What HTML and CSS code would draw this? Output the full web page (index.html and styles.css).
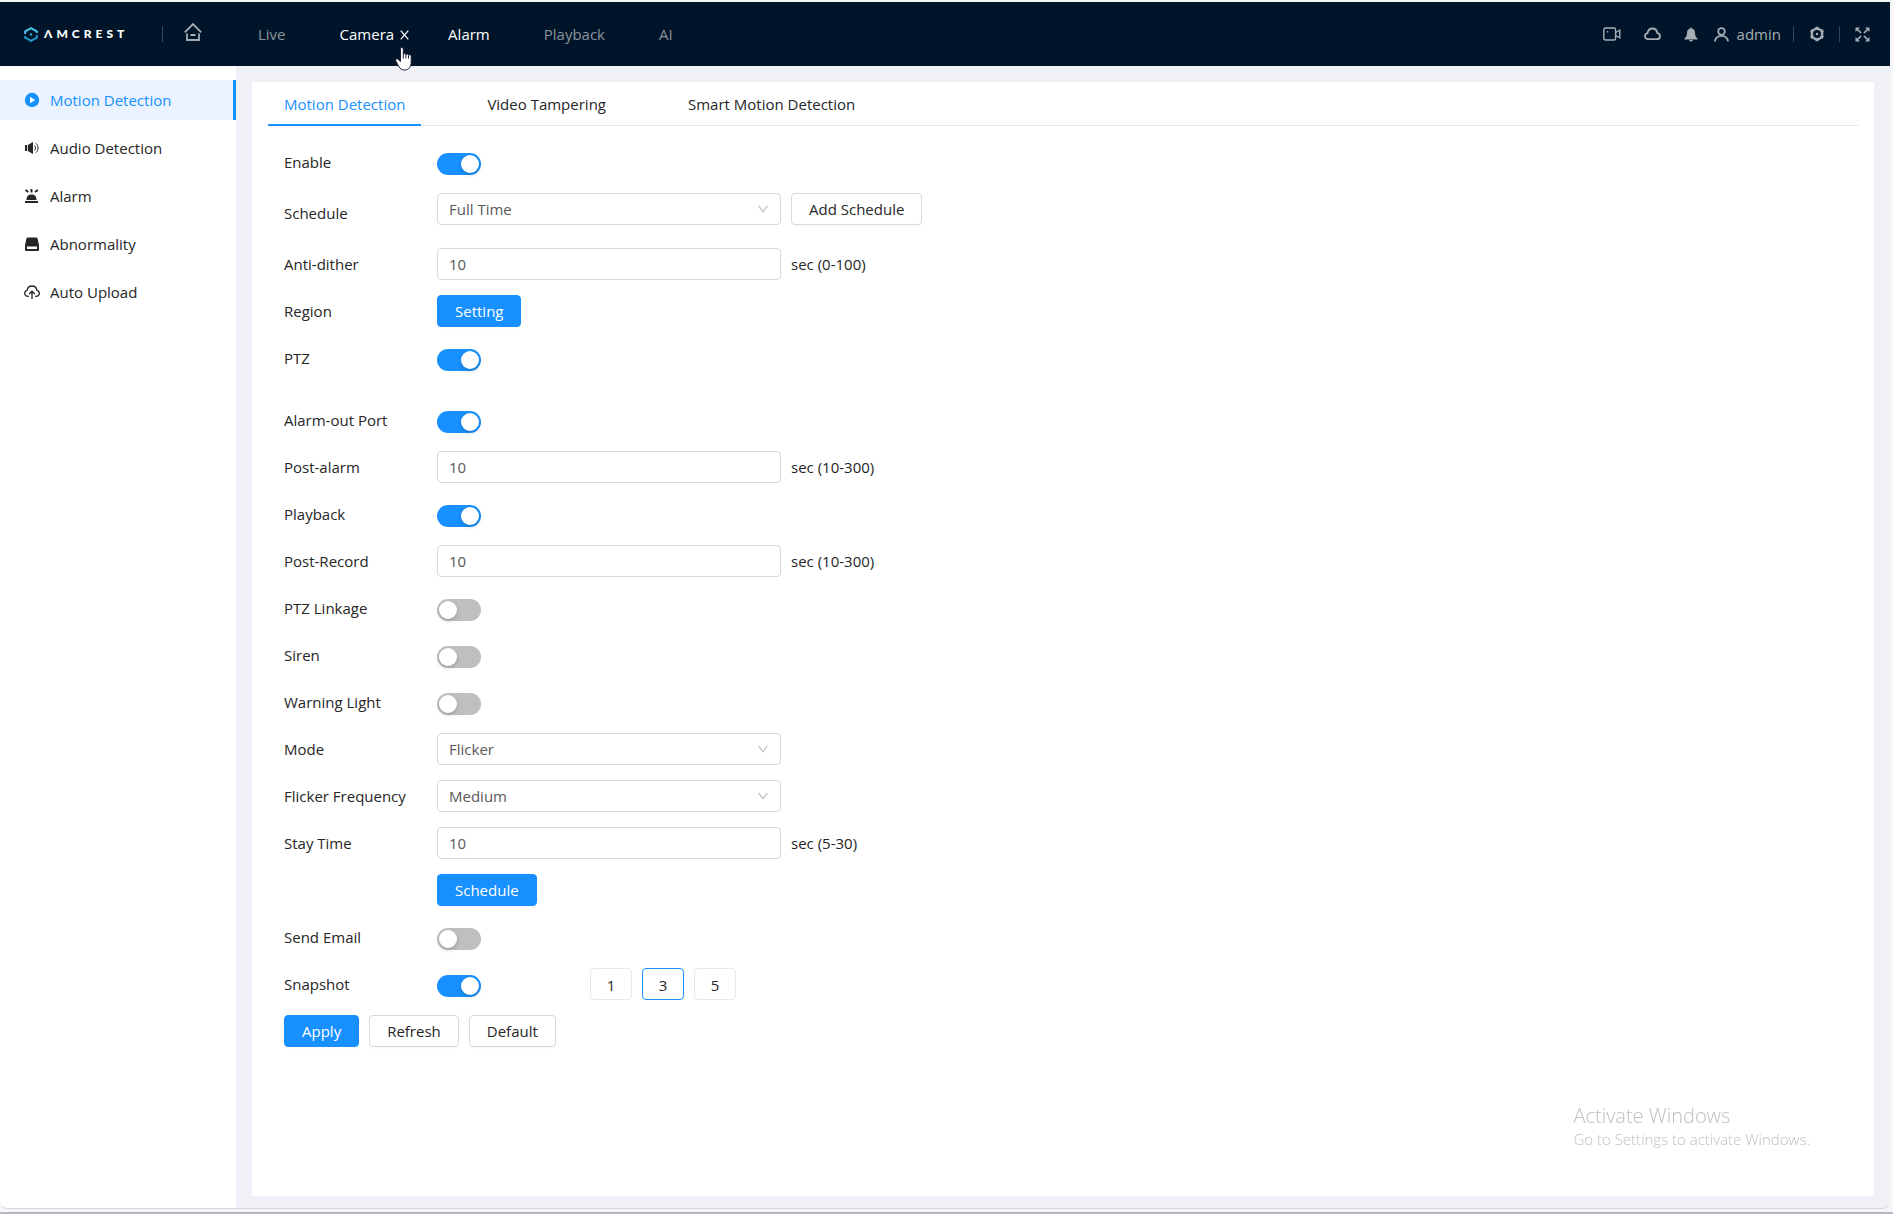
FILE: index.html
```
<!DOCTYPE html>
<html lang="en">
<head>
    <meta charset="UTF-8">
    <title>Amcrest - Motion Detection</title>
    <link rel="stylesheet" href="styles.css">
</head>
<body>
<div class="app">
    <!-- Top bar -->
    <header class="topbar">
        <a href="#" class="brand">
            <svg class="brand-mark" viewBox="0 0 14 15" width="14" height="15" fill="none" stroke-width="2">
                <path d="M1.200 7V4.400L7 1.200l5.800 3.200V6" stroke="#4cc4ea"/>
                <path d="M1.200 9v1.700L7 13.800l5.800-3.100V8" stroke="#1c97cf"/>
                <circle cx="7" cy="7.500" r="1.200" fill="#29a8dc"/>
            </svg>
            <span class="brand-name">ΛMCREST</span>
        </a>
        <span class="divider"></span>
        <a href="#" class="home" aria-label="Home">
            <svg viewBox="0 0 18 20" width="18" height="20" fill="none" stroke="currentColor" stroke-width="1.800">
                <path d="M.8 10.300 9 2l8.200 8.300"/>
                <path d="M3 11.500V18h12v-6.500"/>
                <path d="M6.500 13h5"/>
            </svg>
        </a>
        <nav class="main-nav">
            <a href="#">Live</a>
            <a href="#" class="open">Camera
                <svg class="close" viewBox="0 0 9 10" width="9" height="10" stroke="currentColor" stroke-width="1.200"><path d="M.7.700l7.600 8.600M8.300.700.700 9.300"/></svg>
            </a>
            <a href="#" class="current">Alarm</a>
            <a href="#">Playback</a>
            <a href="#">AI</a>
        </nav>
        <div class="tools">
            <button type="button" class="tool" aria-label="Record">
                <svg viewBox="0 0 18 14" width="18" height="14" fill="none" stroke="currentColor" stroke-width="1.400">
                    <rect x=".8" y="1" width="11.800" height="12" rx="1.500"/>
                    <path d="M12.600 5.500 16.800 3.200v7.600L12.600 8.500"/>
                    <circle cx="4.500" cy="4.700" r=".8" fill="currentColor" stroke="none"/>
                </svg>
            </button>
            <button type="button" class="tool" aria-label="Cloud">
                <svg viewBox="0 0 17 14" width="17" height="14" fill="none" stroke="currentColor" stroke-width="1.800">
                    <path d="M4.300 12.200C2.300 12.200 1 10.900 1 9.200c0-1.500 1-2.700 2.500-3C4 3.300 6 1.500 8.500 1.500s4.400 1.800 4.900 4.600c1.600.3 2.600 1.600 2.600 3.100 0 1.700-1.400 3-3.300 3z"/>
                </svg>
            </button>
            <button type="button" class="tool" aria-label="Notifications">
                <svg viewBox="0 0 14 15" width="14" height="15" fill="currentColor">
                    <path d="M6.300 1.600V.5h1.400v1.100c2.200.4 3.300 2 3.300 4.200 0 2.600.6 4.300 2.500 5.600v1H.5v-1C2.400 10.100 3 8.400 3 5.800c0-2.200 1.100-3.800 3.300-4.200z"/>
                    <path d="M5.200 13h3.600c-.3 1-.9 1.500-1.800 1.500S5.500 14 5.200 13z"/>
                </svg>
            </button>
            <button type="button" class="tool user">
                <svg viewBox="0 0 15 15" width="15" height="15" fill="none" stroke="currentColor" stroke-width="1.800">
                    <circle cx="7.500" cy="4.500" r="3.300"/>
                    <path d="M1 14.500C1.400 10.900 3.900 8.800 7.500 8.800s6.100 2.100 6.500 5.700"/>
                </svg>
                <span>admin</span>
            </button>
            <span class="divider"></span>
            <button type="button" class="tool" aria-label="Settings">
                <svg viewBox="0 0 16 16" width="16" height="16" fill="none" stroke="currentColor">
                    <circle cx="8" cy="8" r="5.200" stroke-width="2.400"/>
                    <path d="M8 .8v2M8 13.200v2M1.800 4.400l1.700 1M12.500 10.600l1.700 1M1.800 11.600l1.700-1M12.500 5.400l1.700-1" stroke-width="3"/>
                    <circle cx="8" cy="8" r="1.200" fill="currentColor" stroke="none"/>
                </svg>
            </button>
            <span class="divider"></span>
            <button type="button" class="tool" aria-label="Full screen">
                <svg viewBox="0 0 15 15" width="15" height="15" fill="currentColor" stroke="currentColor">
                    <path d="M1.500 1.500 6 6M13.500 1.500 9 6M1.500 13.500 6 9M13.500 13.500 9 9" stroke-width="1.700"/>
                    <path d="M.5.500H5L.5 5zM14.500.500V5L10 .500zM.5 14.500V10L5 14.500zM14.500 14.500H10l4.500-4.500z" stroke="none"/>
                </svg>
            </button>
        </div>
    </header>

    <div class="body">
        <!-- Side menu -->
        <aside class="sidebar">
            <a href="#" class="menu-item active">
                <svg viewBox="0 0 16 16" width="16" height="16"><circle cx="8" cy="8" r="7.200" fill="currentColor"/><path d="M6 4.800v6.400L11.200 8z" fill="#fff"/></svg>
                Motion Detection
            </a>
            <a href="#" class="menu-item">
                <svg viewBox="0 0 16 16" width="16" height="16" fill="currentColor">
                    <path d="M1 5h2v6H1zM3.800 5 9 2v12l-5.200-3z"/>
                    <path d="M10.500 5.500c1.300 1.300 1.300 3.700 0 5M12 3.300c2.800 2.600 2.800 6.800 0 9.400" fill="none" stroke="currentColor"/>
                </svg>
                Audio Detection
            </a>
            <a href="#" class="menu-item">
                <svg viewBox="0 0 16 16" width="16" height="16" fill="currentColor">
                    <path d="M1 13h13v2H1zM2.500 12C2.500 8 4.500 6.500 7.500 6.500s5 1.500 5 5.500z"/>
                    <path d="M7.500 1v3.500M1.500 2l2.800 2M13.800 2 11 4" stroke="currentColor" stroke-width="2"/>
                </svg>
                Alarm
            </a>
            <a href="#" class="menu-item">
                <svg viewBox="0 0 16 16" width="16" height="16" fill="currentColor">
                    <path fill-rule="evenodd" d="M3.500 1.500h9c.5 0 .8.200 1 .7L15 9v5c0 .600-.4 1-1 1H2c-.6 0-1-.400-1-1V9l1.500-6.800c.2-.5.5-.7 1-.7zM3 10.500V13h10v-2.500z"/>
                </svg>
                Abnormality
            </a>
            <a href="#" class="menu-item">
                <svg viewBox="0 0 16 16" width="16" height="16" fill="none" stroke="currentColor" stroke-width="1.300">
                    <path d="M4.800 12.300H4C2 12.300.7 11 .7 9.300c0-1.500.9-2.600 2.400-2.900C3.500 3.600 5.400 2 8 2s4.500 1.600 4.900 4.400c1.500.3 2.400 1.400 2.400 2.900 0 1.700-1.300 3-3.300 3h-.8"/>
                    <path d="M8 15V7.500M5.200 10 8 7.200l2.800 2.800"/>
                </svg>
                Auto Upload
            </a>
        </aside>

        <main class="card">
            <nav class="tabs">
                <a href="#" class="tab active">Motion Detection</a>
                <a href="#" class="tab">Video Tampering</a>
                <a href="#" class="tab">Smart Motion Detection</a>
            </nav>

            <form class="settings">
                <div class="row">
                    <label for="enable">Enable</label>
                    <input type="checkbox" class="switch" id="enable" checked>
                </div>
                <div class="row row-tall">
                    <label for="schedule">Schedule</label>
                    <select class="field" id="schedule"><option>Full Time</option></select>
                    <button type="button" class="btn">Add Schedule</button>
                </div>
                <div class="row">
                    <label for="dither">Anti-dither</label>
                    <input type="text" class="field" id="dither" value="10">
                    <span>sec (0-100)</span>
                </div>
                <div class="row">
                    <label for="region">Region</label>
                    <button type="button" class="btn primary" id="region">Setting</button>
                </div>
                <div class="row">
                    <label for="ptz">PTZ</label>
                    <input type="checkbox" class="switch" id="ptz" checked>
                </div>

                <!-- Linkage actions -->
                <div class="row section-start">
                    <label for="alarmOut">Alarm-out Port</label>
                    <input type="checkbox" class="switch" id="alarmOut" checked>
                </div>
                <div class="row">
                    <label for="postAlarm">Post-alarm</label>
                    <input type="text" class="field" id="postAlarm" value="10">
                    <span>sec (10-300)</span>
                </div>
                <div class="row">
                    <label for="playback">Playback</label>
                    <input type="checkbox" class="switch" id="playback" checked>
                </div>
                <div class="row">
                    <label for="postRecord">Post-Record</label>
                    <input type="text" class="field" id="postRecord" value="10">
                    <span>sec (10-300)</span>
                </div>
                <div class="row">
                    <label for="ptzLinkage">PTZ Linkage</label>
                    <input type="checkbox" class="switch" id="ptzLinkage">
                </div>
                <div class="row">
                    <label for="siren">Siren</label>
                    <input type="checkbox" class="switch" id="siren">
                </div>
                <div class="row">
                    <label for="warningLight">Warning Light</label>
                    <input type="checkbox" class="switch" id="warningLight">
                </div>
                <div class="row">
                    <label for="mode">Mode</label>
                    <select class="field" id="mode"><option>Flicker</option></select>
                </div>
                <div class="row">
                    <label for="frequency">Flicker Frequency</label>
                    <select class="field" id="frequency"><option>Medium</option></select>
                </div>
                <div class="row">
                    <label for="stayTime">Stay Time</label>
                    <input type="text" class="field" id="stayTime" value="10">
                    <span>sec (5-30)</span>
                </div>
                <div class="row no-label">
                    <button type="button" class="btn primary">Schedule</button>
                </div>
                <div class="row">
                    <label for="sendEmail">Send Email</label>
                    <input type="checkbox" class="switch" id="sendEmail">
                </div>
                <div class="row">
                    <label for="snapshot">Snapshot</label>
                    <input type="checkbox" class="switch" id="snapshot" checked>
                    <div class="counts">
                        <label class="count"><input type="radio" name="count" value="1"><span>1</span></label>
                        <label class="count"><input type="radio" name="count" value="3" checked><span>3</span></label>
                        <label class="count"><input type="radio" name="count" value="5"><span>5</span></label>
                    </div>
                </div>
                <div class="actions">
                    <button type="button" class="btn primary">Apply</button>
                    <button type="button" class="btn">Refresh</button>
                    <button type="button" class="btn">Default</button>
                </div>
            </form>
        </main>
    </div>
</div>

<div class="watermark">
    <div class="watermark-title">Activate Windows</div>
    <div>Go to Settings to activate Windows.</div>
</div>

<svg class="pointer" viewBox="0 0 18 24" width="18" height="24" fill="#fff" stroke="#1b1b35" stroke-linejoin="round">
    <path d="M5.500 14.500V2.200c0-2.200 2.800-2.200 2.800 0v5.300c.3-1.500 2.500-1.300 2.600.3.400-1.300 2.500-1.100 2.600.5.600-1.100 2.600-.8 2.700.8v5.400c0 5-2.200 8.500-6.500 8.500-3 0-4.700-1.200-6-3.800L.8 14c-.8-1.600.9-3 2.200-1.900z"/>
    <path d="M8.300 7.500v4M10.900 8v3.500M13.500 8.500v3"/>
</svg>
</body>
</html>
```
FILE: styles.css
```
* { box-sizing: border-box; }
body { margin: 0; height: 100vh; padding: 2px 3px 3px 0; display: flex; flex-direction: column; background: #f5f6f8; border-bottom: 2px solid #b4b6c2; font-family: "Open Sans", "Noto Sans", sans-serif; font-size: 15px; line-height: 20px; color: #262626; }
a { color: inherit; text-decoration: none; }
button, input, select { font: inherit; color: inherit; }
svg { display: block; flex: none; }

.app { flex: 1; display: flex; flex-direction: column; background: #f0f1f6; border-bottom: 1px solid #d4d5da; border-radius: 0 0 8px 8px; overflow: hidden; }

/* top bar */
.topbar { height: 64px; flex: none; display: flex; align-items: center; padding: 0 20px 0 24px; background: #001529; color: #a6adb4; }
.brand { display: flex; align-items: center; gap: 6px; width: 138px; }
.brand-name { font-family: Lato, sans-serif; font-size: 12px; font-weight: 900; letter-spacing: 4px; color: #fff; }
.divider { width: 1px; height: 16px; background: #35465a; }
.home { margin: 0 29px 0 21px; padding-bottom: 4px; }
.main-nav { display: flex; }
.main-nav a { position: relative; padding: 0 27px; color: #8a939d; }
.main-nav .open { color: #fff; }
.main-nav .current { color: #fff; font-weight: 500; }
.close { position: absolute; right: 12px; top: 6px; }
.tools { margin-left: auto; display: flex; align-items: center; }
.tool { display: flex; align-items: center; gap: 8px; padding: 0; margin-left: 20px; border: 0; background: none; cursor: pointer; }
.tools .tool { color: #a6adb4; }
.tool + .tool { margin-left: 23px; }
.tool + .user { margin-left: 16px; }
.divider + .tool { margin-left: 15px; }
.tool + .divider { margin-left: 14px; }
.user + .divider { margin-left: 12px; }

.body { flex: 1; display: flex; }

/* side menu */
.sidebar { width: 236px; flex: none; padding-top: 14px; background: #fff; }
.menu-item { display: flex; align-items: center; gap: 10px; height: 40px; margin-bottom: 8px; padding-left: 24px; }
.menu-item.active { color: #1890ff; background: #eaf3ff; border-right: 3px solid #1890ff; }

.card { flex: 1; margin: 16px 16px 12px; padding: 0 16px; background: #fff; }
.tabs { display: flex; gap: 50px; border-bottom: 1px solid #e8e8e8; }
.tab { height: 44px; margin-bottom: -1px; padding: 12px 16px 0; border-bottom: 2px solid transparent; }
.tab.active { color: #1890ff; border-color: #1890ff; }

/* form */
.settings { display: flex; flex-direction: column; gap: 15px; padding: 20px 16px; }
.row { display: flex; align-items: center; gap: 10px; min-height: 32px; }
.row > label { width: 143px; flex: none; }
.row-tall { height: 40px; align-items: flex-start; }
.row-tall > label { line-height: 40px; }
.section-start { margin-top: 15px; }
.no-label { padding-left: 153px; }
.field { width: 344px; height: 32px; padding: 0 11px; border: 1px solid #d9d9d9; border-radius: 4px; background: #fff; color: #595959; }
select.field { appearance: none; background: #fff url("data:image/svg+xml,%3Csvg xmlns='http://www.w3.org/2000/svg' width='10' height='8' fill='none' stroke='%23bfbfbf' stroke-width='1.2'%3E%3Cpath d='M.6.8 5 6.800 9.400.8'/%3E%3C/svg%3E") no-repeat right 12px center; }

.btn { height: 32px; padding: 0 17px; border: 1px solid #d9d9d9; border-radius: 4px; background: #fff; box-shadow: 0 2px 0 #00000004; cursor: pointer; }
.btn.primary { color: #fff; background: #1890ff; border-color: #1890ff; }

.switch { appearance: none; width: 44px; height: 22px; margin: 4px 0 0; padding: 2px; border-radius: 11px; background: #bfbfbf; cursor: pointer; }
.switch::before { content: ""; display: block; width: 18px; height: 18px; border-radius: 50%; background: #fff; box-shadow: 0 2px 4px #00230b33; }
.switch:checked { background: #1890ff; }
.switch:checked::before { margin-left: auto; }

.counts { display: flex; gap: 10px; margin-left: 99px; }
.count input { position: absolute; opacity: 0; }
.count span { display: block; width: 42px; height: 32px; line-height: 32px; text-align: center; border: 1px solid #e8e8e8; border-radius: 4px; cursor: pointer; }
.count input:checked + span { border-color: #1890ff; }
.actions { display: flex; gap: 10px; }

/* overlays */
.watermark { position: fixed; right: 83px; bottom: 65px; color: #c0c0c0; font-weight: 300; pointer-events: none; }
.watermark-title { font-size: 20px; line-height: 26px; }
.pointer { position: fixed; left: 395px; top: 47px; pointer-events: none; }
```
